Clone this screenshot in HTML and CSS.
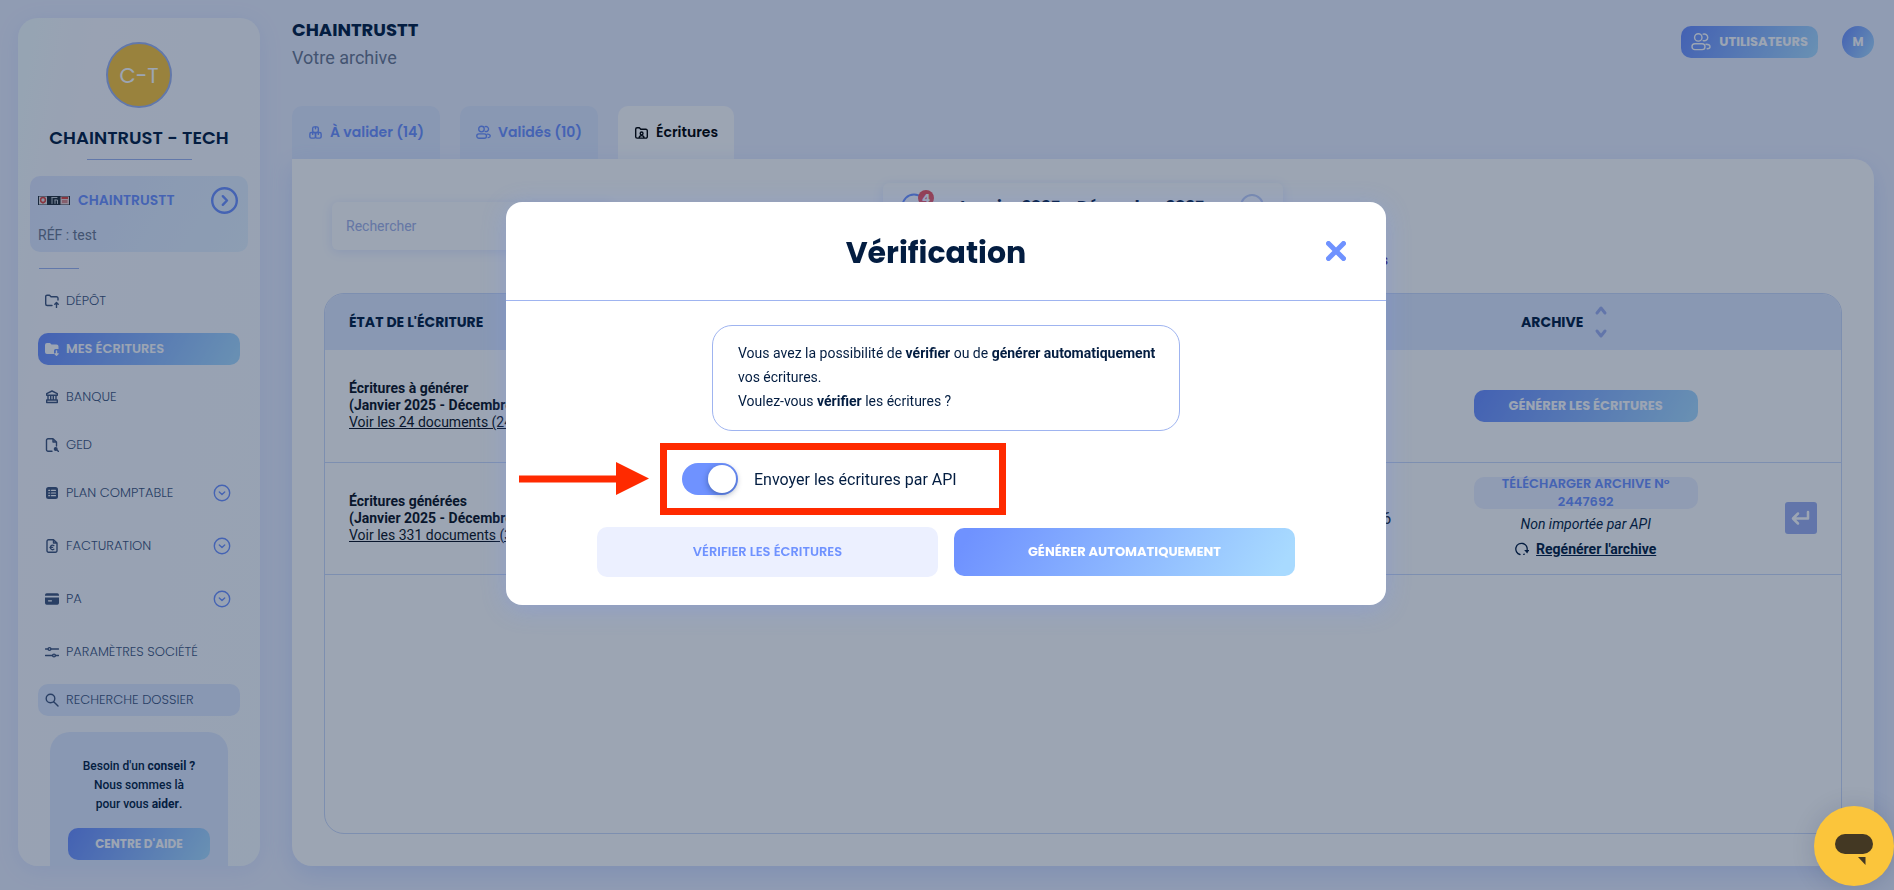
FILE: index.html
```html
<!DOCTYPE html>
<html lang="fr">
<head>
    <meta charset="UTF-8">
    <meta name="viewport" content="width=device-width, initial-scale=1.0">
    <title>Chaintrust - Mes écritures</title>
    <link rel="stylesheet" href="styles.css">
</head>
<body>
<svg class="sprite" aria-hidden="true">
    <symbol id="i-users" viewBox="0 0 20 20">
        <circle cx="7.3" cy="5.4" r="3.7" />
        <rect x="1" y="11.8" width="13" height="5.8" rx="2.9" />
        <path d="M12.2 2.2a3.4 3.4 0 1 1 0 6.4M15 12.2c2.6 0 4 1 4 2.5s-1 2-2.8 2.1" />
    </symbol>
    <symbol id="i-down" viewBox="0 0 18 18">
        <circle cx="9" cy="9" r="7.7" />
        <path d="M6.3 8l2.7 2.4L11.7 8" />
    </symbol>
</svg>

<div class="app">
    <aside class="sidebar">
        <div class="avatar">C-T</div>
        <h2 class="company">CHAINTRUST - TECH</h2>
        <hr class="rule">
        <div class="folder">
            <div class="folder-row">
                <svg class="folder-logo" viewBox="0 0 32 9">
                    <rect width="32" height="9" fill="#24303a" />
                    <rect x="1" y="0.5" width="8" height="8" fill="#e8e4e4" />
                    <circle cx="5" cy="4" r="2.4" fill="none" stroke="#e0453f" stroke-width="1.5" />
                    <path d="M5 8l-1.5-2h3z" fill="#e0453f" />
                    <path d="M14 1.5h5M14 1.5v6M17 4v3.5M17 4h2.5v3.5" fill="none" stroke="#c9ced4" />
                    <rect x="22.5" y="0.5" width="8.5" height="8" fill="#f0d4d4" />
                    <rect x="23.5" y="1" width="6.5" height="2" fill="#e0453f" />
                    <rect x="24" y="4" width="5.5" height="3" fill="#d98a8a" />
                </svg>
                <strong class="folder-name">CHAINTRUSTT</strong>
                <svg class="folder-go" viewBox="0 0 27 27">
                    <circle cx="13.5" cy="13.5" r="12.3" />
                    <path d="M11.8 9.2l4.2 4.3-4.2 4.3" />
                </svg>
            </div>
            <div class="folder-ref">RÉF : test</div>
        </div>
        <hr class="rule rule-short">
        <nav class="menu">
            <a class="menu-item" href="#">
                <svg class="icon" viewBox="0 0 14 14"><path d="M7 11.500H2.200A1.500 1.500 0 0 1 .7 10V2.500A1.300 1.300 0 0 1 2 1.200h2.500L6 2.700h5.500A1.500 1.500 0 0 1 13 4.200V6M11.500 13.500V8.700M9.800 10.200l1.700-1.700 1.700 1.700" /></svg>
                DÉPÔT
            </a>
            <a class="menu-item is-active" href="#">
                <svg class="icon" viewBox="0 0 14 14"><path class="fill" d="M0 3A2 2 0 0 1 2 1h3l1.500 1.500h5A2 2 0 0 1 13.500 4.500V7H10.500A1.500 1.500 0 0 0 9 8.500V12H2A2 2 0 0 1 0 10z" /><path d="M11.500 9v4M10 11.700l1.500 1.600 1.500-1.600" /></svg>
                MES ÉCRITURES
            </a>
            <a class="menu-item" href="#">
                <svg class="icon" viewBox="0 0 14 14"><path d="M7 1l5.300 2.600v1.700H1.700V3.600zM3 5.500V10M5.700 5.500V10M8.300 5.500V10M11 5.500V10M1.700 10h10.600v2.500H1.700z" /></svg>
                BANQUE
            </a>
            <a class="menu-item" href="#">
                <svg class="icon" viewBox="0 0 14 14"><path d="M7 13.200H3A1.500 1.500 0 0 1 1.500 11.700V2.300A1.500 1.500 0 0 1 3 .8h5L11.500 4v4M8 .8V4h3.500M12 12l1.500 1.500" /><circle class="solid" cx="10.700" cy="11" r="1.300" /></svg>
                GED
            </a>
            <a class="menu-item has-sub" href="#">
                <svg class="icon" viewBox="0 0 14 14"><rect class="fill" x="1" y="1" width="12" height="12" rx="2.500" /><path class="cut" d="M3.700 4.300h1M6.500 4.300h4M3.700 7h1M6.500 7h4M3.700 9.700h1M6.500 9.700h4" /></svg>
                PLAN COMPTABLE
                <svg class="chevron"><use href="#i-down" /></svg>
            </a>
            <a class="menu-item has-sub" href="#">
                <svg class="icon" viewBox="0 0 14 14"><path d="M3.500.8h5L12 4v7.700a1.500 1.500 0 0 1-1.500 1.500h-7A1.500 1.500 0 0 1 2 11.700V2.300A1.500 1.500 0 0 1 3.500.8zM8.500.8V4H12M8.800 6.600a2.200 2.200 0 1 0 0 3.600M5 8.400h2.600" /></svg>
                FACTURATION
                <svg class="chevron"><use href="#i-down" /></svg>
            </a>
            <a class="menu-item has-sub" href="#">
                <svg class="icon" viewBox="0 0 14 14"><path class="fill" d="M0 3.700V3a1.700 1.700 0 0 1 1.700-1.700h10.600A1.700 1.700 0 0 1 14 3v.7zM0 5.500h14V11a1.700 1.700 0 0 1-1.700 1.700H1.700A1.700 1.700 0 0 1 0 11z" /><path class="cut" d="M3.500 8.800h3" /></svg>
                PA
                <svg class="chevron"><use href="#i-down" /></svg>
            </a>
            <a class="menu-item" href="#">
                <svg class="icon" viewBox="0 0 14 14"><path d="M.5 4h2.600M6 4h7.500M.5 10.500h7M10.500 10.500h3" /><circle cx="4.500" cy="4" r="1.400" /><circle cx="9" cy="10.500" r="1.400" /></svg>
                PARAMÈTRES SOCIÉTÉ
            </a>
            <a class="menu-item is-soft" href="#">
                <svg class="icon" viewBox="0 0 14 14"><circle cx="5.500" cy="5.500" r="4.300" /><path d="M8.700 8.700l4.300 4.300" /></svg>
                RECHERCHE DOSSIER
            </a>
        </nav>
        <div class="help">
            <p>Besoin d'un <b>conseil ?</b><br>Nous sommes là<br>pour vous <b>aider</b>.</p>
            <button class="btn btn-primary btn-block" type="button">CENTRE D'AIDE</button>
        </div>
    </aside>

    <main class="main">
        <header class="header">
            <div>
                <h1 class="page-title">CHAINTRUSTT</h1>
                <p class="page-sub">Votre archive</p>
            </div>
            <div class="header-actions">
                <button class="btn btn-primary btn-users" type="button">
                    <svg class="users-icon"><use href="#i-users" /></svg>
                    UTILISATEURS
                </button>
                <button class="user" type="button">M</button>
            </div>
        </header>

        <nav class="tabs">
            <a class="tab" href="#">
                <svg class="tab-icon" viewBox="-1 -1 16 16"><rect x="4" y="1" width="6" height="6" rx="1.500" /><rect x="1" y="7" width="6" height="6" rx="1.500" /><rect x="7" y="7" width="6" height="6" rx="1.500" /><path d="M7 1v2M4 7v2M10 7v2" /></svg>
                À valider (14)
            </a>
            <a class="tab" href="#">
                <svg class="tab-icon tab-users"><use href="#i-users" /></svg>
                Validés (10)
            </a>
            <a class="tab is-current" href="#">
                <svg class="tab-icon" viewBox="-1 -1 16 16"><path d="M4.500 13H2.300A1.500 1.500 0 0 1 .8 11.500v-8A1.500 1.500 0 0 1 2.300 2h2.400l1.500 1.500h5.500A1.500 1.500 0 0 1 13.200 5v6.500a1.500 1.500 0 0 1-1.500 1.500H4.500c0-3.500 5.200-3.500 5.200 0" /><circle cx="7.100" cy="8" r="1.500" /></svg>
                Écritures
            </a>
        </nav>

        <section class="panel">
            <div class="toolbar">
                <input class="search" type="search" placeholder="Rechercher" aria-label="Rechercher">
                <div class="period">
                    <span class="period-filter">
                        <svg viewBox="0 0 26 26"><circle cx="13" cy="13" r="11.5" /></svg>
                        <span class="badge">4</span>
                    </span>
                    <strong>Janvier 2025 - Décembre 2025</strong>
                    <svg class="period-next" viewBox="0 0 26 26"><circle cx="13" cy="13" r="11" /></svg>
                </div>
                <a class="archives-link" href="#">Voir archives</a>
            </div>

            <div class="table-wrap">
                <table class="entries">
                    <thead>
                        <tr>
                            <th class="col-state">ÉTAT DE L'ÉCRITURE</th>
                            <th class="col-archive">
                                <span class="sortable">ARCHIVE
                                    <svg class="sort" viewBox="0 0 14 34"><path d="M3 8l4-5 4 5M3 26l4 5 4-5" /></svg>
                                </span>
                            </th>
                            <th class="col-action"></th>
                        </tr>
                    </thead>
                    <tbody>
                        <tr>
                            <td><b>Écritures à générer<br>(Janvier 2025 - Décembre 2025)</b><br><a href="#">Voir les 24 documents (24)</a></td>
                            <td class="col-archive"><button class="btn btn-primary btn-archive" type="button">GÉNÉRER LES ÉCRITURES</button></td>
                            <td></td>
                        </tr>
                        <tr>
                            <td>
                                <div class="state">
                                    <div><b>Écritures générées<br>(Janvier 2025 - Décembre 2025)</b><br><a href="#">Voir les 331 documents (331)</a></div>
                                    <span class="date">6</span>
                                </div>
                            </td>
                            <td class="col-archive">
                                <div class="archive">
                                    <button class="btn btn-light btn-archive" type="button">TÉLÉCHARGER ARCHIVE N° 2447692</button>
                                    <em>Non importée par API</em>
                                    <a class="regen" href="#">
                                        <svg viewBox="0 0 14 14"><path d="M5 12.500A5.700 5.700 0 1 1 12 8.500M8.800 12.400l.5-.2" /><path class="fill" d="M9.200 8l5 0-2 3.600z" /></svg>
                                        <span>Regénérer l'archive</span>
                                    </a>
                                </div>
                            </td>
                            <td class="col-action">
                                <button class="back" type="button" aria-label="Retour">
                                    <svg viewBox="0 0 20 16"><path d="M17 2v6.500H3M7 3.500l-5 5 5 5" /></svg>
                                </button>
                            </td>
                        </tr>
                    </tbody>
                </table>
            </div>
        </section>
    </main>
</div>

<div class="overlay">
    <div class="modal" role="dialog" aria-labelledby="modal-title">
        <div class="modal-head">
            <h2 id="modal-title">Vérification</h2>
            <button class="close" type="button" aria-label="Fermer">
                <svg viewBox="0 0 20 20"><path d="M2.500 2.500l15 15M17.500 2.500l-15 15" /></svg>
            </button>
        </div>
        <div class="modal-body">
            <p class="notice">Vous avez la possibilité de <b>vérifier</b> ou de <b>générer automatiquement</b> vos écritures.<br>Voulez-vous <b>vérifier</b> les écritures ?</p>
            <div class="api">
                <input class="switch" type="checkbox" id="api" checked>
                <label for="api">Envoyer les écritures par API</label>
                <span class="mark-box"></span>
                <svg class="mark-arrow" viewBox="0 0 130 33"><path d="M0 13.500h97V0l33 16.500L97 33V20.500H0z" /></svg>
            </div>
            <div class="modal-actions">
                <button class="btn btn-light btn-large" type="button">VÉRIFIER LES ÉCRITURES</button>
                <button class="btn btn-primary btn-large" type="button">GÉNÉRER AUTOMATIQUEMENT</button>
            </div>
        </div>
    </div>
</div>

<button class="chat" type="button" aria-label="Discuter">
    <svg viewBox="0 0 80 80"><rect x="21" y="28" width="38" height="20" rx="10" /><path d="M44 51h7.500v8z" /></svg>
</button>
</body>
</html>
```

FILE: styles.css
```css
:root {
    --dark: #031d41;
    --primary: #6f92ff;
    --border: #9fb4f0;
    --soft: #dfe9ff;
    --light: #ecf0ff;
    --gradient: linear-gradient(120deg, #6f92ff 5%, #a8daff 95%);
    --title-font: Poppins, Inter, sans-serif;
    --text-font: Roboto, sans-serif;
}
* {
    box-sizing: border-box;
}
body {
    margin: 0;
    background: var(--light);
    color: var(--dark);
    font-family: var(--text-font);
    font-size: 14px;
}
h1, h2, p {
    margin: 0;
}
a {
    color: inherit;
}
svg {
    fill: none;
    stroke: currentColor;
    stroke-linecap: round;
    stroke-linejoin: round;
    flex: none;
}
.solid {
    fill: currentColor;
}
.fill {
    fill: currentColor;
    stroke: none;
}
.sprite {
    display: none;
}
.app {
    display: flex;
    gap: 32px;
    height: 100vh;
    padding: 0 20px 24px 18px;
}

/* buttons */
.btn {
    display: flex;
    align-items: center;
    justify-content: center;
    height: 32px;
    padding: 0 16px;
    border: 0;
    border-radius: 10px;
    font-family: var(--title-font);
    font-size: 13px;
    font-weight: 700;
    line-height: 18px;
}
.btn-primary {
    background: var(--gradient);
    color: #fff;
}
.btn-light {
    background: var(--light);
    color: var(--primary);
    font-weight: 600;
}
.btn-block {
    width: 100%;
    font-size: 12px;
}

/* sidebar */
.sidebar {
    display: flex;
    flex: none;
    flex-direction: column;
    align-items: center;
    width: 242px;
    margin-top: 18px;
    padding: 24px 12px 0;
    border-radius: 20px;
    background: linear-gradient(100deg, #f5feff, #fafaff 20%, #f7fcff);
    box-shadow: 0 4px 24px #dbe4ff;
    overflow: hidden;
}
.sidebar > * {
    flex-shrink: 0;
}
.avatar {
    display: flex;
    align-items: center;
    justify-content: center;
    width: 66px;
    height: 66px;
    border: 2px solid var(--border);
    border-radius: 50%;
    background: #fbc53b;
    color: #fff;
    font-family: var(--title-font);
    font-size: 21px;
}
.company {
    margin-top: 16px;
    font-family: var(--title-font);
    font-size: 18px;
    font-weight: 600;
    line-height: 28px;
}
.rule {
    width: 105px;
    margin: 7px 0 16px;
    border: 0;
    border-top: 1px solid var(--border);
}
.folder {
    width: 100%;
    height: 76px;
    padding: 11px 10px 0 8px;
    border-radius: 10px;
    background: linear-gradient(120deg, #dfe7ff, #e6f3ff);
}
.folder-row {
    display: flex;
    align-items: center;
    gap: 8px;
    color: var(--primary);
}
.folder-logo {
    width: 32px;
    height: 9px;
    stroke: none;
}
.folder-name {
    flex: 1;
    font-family: var(--title-font);
    font-size: 14px;
    font-weight: 600;
}
.folder-go {
    width: 27px;
    height: 27px;
    stroke-width: 2.4;
}
.folder-ref {
    margin-top: 11px;
    color: #6b7891;
    line-height: 20px;
}
.rule-short {
    align-self: flex-start;
    width: 40px;
    margin: 16px 0 16px 9px;
}
.menu {
    width: 100%;
    padding: 0 8px;
}
.menu-item {
    display: flex;
    align-items: center;
    gap: 7px;
    height: 32px;
    margin-bottom: 16px;
    padding: 0 9px 0 7px;
    border-radius: 10px;
    color: #40557c;
    font-family: var(--title-font);
    font-size: 13px;
    font-weight: 300;
    text-decoration: none;
}
.menu-item.has-sub {
    margin-bottom: 21px;
}
.menu-item.is-active {
    background: var(--gradient);
    color: #fff;
    font-weight: 600;
}
.menu-item.is-soft {
    background: var(--soft);
}
.icon {
    width: 14px;
    height: 14px;
    stroke-width: 1.4;
}
.cut {
    stroke: #fff;
    stroke-width: 1.2;
}
.chevron {
    width: 18px;
    height: 18px;
    margin-left: auto;
    color: var(--primary);
    stroke-width: 1.4;
}
.help {
    width: 178px;
    padding: 25px 18px;
    border-radius: 20px 20px 0 0;
    background: var(--soft);
    font-size: 12px;
    font-weight: 500;
    line-height: 19px;
    text-align: center;
}
.help .btn {
    margin-top: 14px;
}

/* header */
.main {
    display: flex;
    flex: 1;
    flex-direction: column;
    min-width: 0;
}
.header {
    display: flex;
    justify-content: space-between;
    height: 106px;
    padding-top: 16px;
}
.page-title {
    font-family: var(--title-font);
    font-size: 18px;
    font-weight: 700;
    line-height: 28px;
}
.page-sub {
    color: #6b7891;
    font-size: 18px;
    line-height: 28px;
}
.header-actions {
    display: flex;
    gap: 24px;
    padding-top: 10px;
}
.btn-users {
    gap: 8px;
    padding: 0 10px;
}
.users-icon {
    width: 20px;
    height: 20px;
    stroke-width: 1.4;
}
.user {
    width: 32px;
    height: 32px;
    padding: 0;
    border: 0;
    border-radius: 50%;
    background: var(--gradient);
    color: #fff;
    font-family: var(--title-font);
    font-size: 12px;
    font-weight: 700;
}

/* tabs */
.tabs {
    display: flex;
    gap: 20px;
}
.tab {
    display: flex;
    align-items: center;
    gap: 7px;
    height: 53px;
    padding: 0 16px;
    border-radius: 10px 10px 0 0;
    background: var(--soft);
    color: var(--primary);
    font-family: var(--title-font);
    font-size: 14px;
    font-weight: 600;
    text-decoration: none;
}
.tab.is-current {
    background: #fff;
    color: #000;
}
.tab-icon {
    width: 15px;
    height: 15px;
    stroke-width: 1.5;
}
.tab-users {
    stroke-width: 1.8;
}

/* panel */
.panel {
    display: flex;
    flex: 1;
    flex-direction: column;
    padding: 24px 32px 32px;
    border-radius: 0 20px 20px 20px;
    background: #fff;
    box-shadow: 0 8px 24px #cfdcff;
}
.toolbar {
    display: grid;
    grid-template-columns: 1fr 400px 1fr;
    align-items: center;
    height: 86px;
    margin-bottom: 24px;
}
.search {
    width: 280px;
    height: 48px;
    margin-left: 8px;
    padding: 0 14px;
    border: 0;
    border-radius: 6px;
    background: #fff;
    box-shadow: 0 2px 12px #e3eaff;
    font: inherit;
}
.search::placeholder {
    color: #a3b2e8;
}
.period {
    display: flex;
    align-items: center;
    align-self: start;
    gap: 29px;
    height: 48px;
    padding: 0 18px 2px;
    border-radius: 6px;
    box-shadow: 0 2px 12px #e3eaff;
    font-family: var(--title-font);
    font-size: 16px;
}
.period svg {
    display: block;
    width: 26px;
    height: 26px;
    stroke-width: 2;
}
.period-filter {
    position: relative;
    color: var(--primary);
}
.period .period-next {
    margin-left: auto;
    color: #c4d0f5;
}
.badge {
    position: absolute;
    top: -3px;
    right: -7px;
    width: 16px;
    height: 16px;
    border-radius: 50%;
    background: #f2545b;
    color: #fff;
    font-size: 12px;
    font-weight: 700;
    line-height: 18px;
    text-align: center;
}
.archives-link {
    align-self: end;
    justify-self: start;
    width: 105px;
    color: #551a8b;
    font-weight: 700;
    line-height: 18px;
    text-align: right;
    text-decoration: none;
}

/* table */
.table-wrap {
    flex: 1;
    border: 1px solid #ccdafa;
    border-radius: 20px;
    overflow: hidden;
}
.entries {
    width: 100%;
    border-collapse: collapse;
    table-layout: fixed;
    color: #0b1220;
    line-height: 17px;
}
.entries th {
    height: 56px;
    padding: 0 24px;
    background: var(--soft);
    color: var(--dark);
    font-family: var(--title-font);
    font-size: 14px;
    font-weight: 700;
    text-align: left;
}
.entries td {
    height: 112px;
    padding: 0 20px 0 24px;
    border-bottom: 1px solid #ccdafa;
}
.entries .col-archive {
    width: 23%;
    padding: 0 20px;
    text-align: center;
}
.entries .col-action {
    width: 81px;
    padding: 0;
}
.sortable {
    display: inline-flex;
    align-items: center;
    gap: 11px;
    padding-right: 42px;
}
.sort {
    width: 14px;
    height: 34px;
    color: #9fb0f0;
    stroke-width: 3;
}
.btn-archive {
    width: 224px;
    margin: 0 auto;
}
.state {
    display: flex;
    align-items: center;
    justify-content: space-between;
}
.date {
    font-size: 16px;
}
.archive {
    display: flex;
    flex-direction: column;
    align-items: center;
    gap: 5px;
    color: var(--dark);
}
.archive em {
    line-height: 20px;
}
.regen {
    display: flex;
    align-items: center;
    gap: 7px;
    font-weight: 700;
    line-height: 20px;
    text-decoration: none;
}
.regen span {
    text-decoration: underline;
}
.regen svg {
    width: 14px;
    height: 14px;
    stroke-width: 1.3;
}
.back {
    display: flex;
    align-items: center;
    justify-content: center;
    width: 32px;
    height: 32px;
    margin: 0 auto;
    padding: 0;
    border: 0;
    border-radius: 3px;
    background: #9fb0f0;
    color: #fff;
}
.back svg {
    width: 20px;
    height: 16px;
    stroke-width: 2.5;
}

/* modal */
.overlay {
    position: fixed;
    inset: 0;
    display: flex;
    align-items: flex-start;
    justify-content: center;
    padding-top: 202px;
    background: rgba(7, 30, 66, 0.4);
}
.modal {
    width: 880px;
    margin-right: 2px;
    border-radius: 16px;
    background: #fff;
    box-shadow: 0 4px 24px rgba(111, 146, 255, 0.3);
}
.modal-head {
    display: flex;
    align-items: center;
    height: 99px;
    padding: 0 40px;
    border-bottom: 1px solid var(--border);
}
.modal-head h2 {
    flex: 1;
    padding-top: 4px;
    font-family: var(--title-font);
    font-size: 30px;
    font-weight: 700;
    text-align: center;
}
.close {
    display: flex;
    padding: 0;
    border: 0;
    background: none;
    color: var(--primary);
}
.close svg {
    width: 20px;
    height: 20px;
    stroke-width: 5;
}
.modal-body {
    padding: 24px 91px 28px;
}
.notice {
    width: 468px;
    margin: 0 auto;
    padding: 15px 20px 17px 25px;
    border: 1px solid var(--border);
    border-radius: 20px;
    line-height: 24px;
}
.api {
    position: relative;
    display: flex;
    align-items: center;
    gap: 16px;
    width: max-content;
    margin: 32px 0 32px 85px;
    font-size: 16px;
}
.switch {
    width: 56px;
    height: 32px;
    margin: 0;
    padding: 2px;
    border-radius: 16px;
    background: var(--primary);
    appearance: none;
}
.switch::before {
    display: block;
    width: 28px;
    height: 28px;
    border-radius: 50%;
    background: #fff;
    box-shadow: 0 2px 6px rgba(3, 29, 65, 0.4);
    content: "";
}
.switch:checked::before {
    margin-left: auto;
}
.mark-box {
    position: absolute;
    top: -20px;
    right: -49px;
    bottom: -20px;
    left: -22px;
    border: 7px solid #ff2a00;
    pointer-events: none;
}
.mark-arrow {
    position: absolute;
    top: -1px;
    left: -163px;
    width: 130px;
    height: 33px;
    fill: #ff2a00;
    stroke: none;
}
.modal-actions {
    display: flex;
    align-items: center;
    gap: 16px;
}
.btn-large {
    flex: 1;
    height: 48px;
}
.btn-large.btn-light {
    height: 50px;
}

.chat {
    position: fixed;
    right: 0;
    bottom: 4px;
    width: 80px;
    height: 80px;
    padding: 0;
    border: 0;
    border-radius: 50%;
    background: #fbc53b;
    box-shadow: 0 2px 24px rgba(3, 29, 65, 0.15);
}
.chat svg {
    display: block;
    fill: #433823;
    stroke: none;
}
```
